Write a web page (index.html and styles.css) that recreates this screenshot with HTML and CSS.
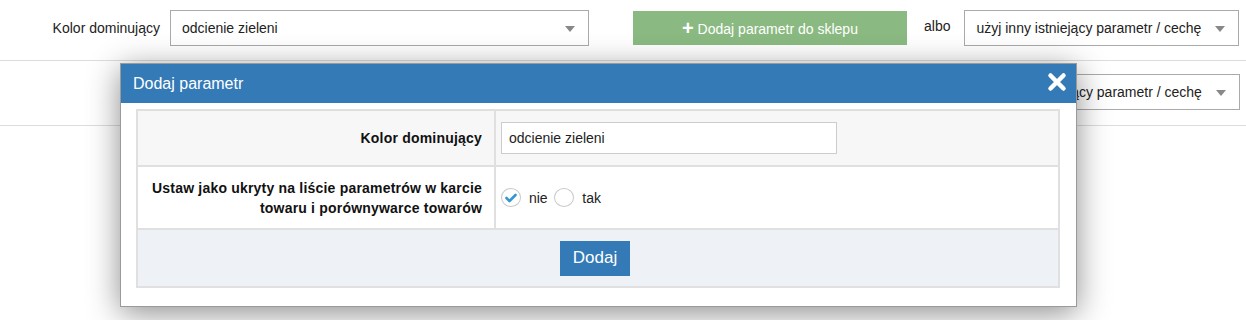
FILE: index.html
```html
<!DOCTYPE html>
<html lang="pl">
<head>
    <meta charset="UTF-8">
    <title>Parametry</title>
    <link rel="stylesheet" href="styles.css">
</head>
<body>
    <!-- Parameter rows -->
    <div class="param-row first">
        <label class="param-label">Kolor dominujący</label>
        <div class="select wide">odcienie zieleni</div>
        <a href="#" class="btn-add"><span class="plus">+</span> Dodaj parametr do sklepu</a>
        <span class="albo">albo</span>
        <div class="select narrow">użyj inny istniejący parametr / cechę</div>
    </div>
    <!-- second row: only the right select is visible behind the modal -->
    <div class="param-row second">
        <div class="select narrow">użyj inny istniejący parametr / cechę</div>
    </div>

    <!-- Modal window -->
    <div class="modal">
        <div class="modal-header">
            <span class="modal-title">Dodaj parametr</span>
            <svg class="close" width="20" height="20" viewBox="0 0 20 20">
                <path d="M3.5 3.5 L16.5 16.5 M16.5 3.5 L3.5 16.5" stroke="#fff" stroke-width="4.5" stroke-linecap="round"/>
            </svg>
        </div>
        <div class="modal-body">
            <table class="form-table">
                <tr class="row-gray">
                    <th>Kolor dominujący</th>
                    <td><input type="text" class="text-input" value="odcienie zieleni"></td>
                </tr>
                <tr class="row-white">
                    <th>Ustaw jako ukryty na liście parametrów w karcie towaru i porównywarce towarów</th>
                    <td>
                        <span class="radio checked">
                            <svg width="12" height="10" viewBox="0 0 12 10"><path d="M1.5 5 L4.5 8 L10.5 2" stroke="#3596d4" stroke-width="2.6" fill="none" stroke-linecap="round" stroke-linejoin="round"/></svg>
                        </span>
                        <span class="radio-text">nie</span>
                        <span class="radio"></span>
                        <span class="radio-text">tak</span>
                    </td>
                </tr>
                <tr class="row-footer">
                    <td colspan="2"><button class="btn-submit">Dodaj</button></td>
                </tr>
            </table>
        </div>
    </div>
</body>
</html>
```

FILE: styles.css
```css
* {
    margin: 0;
    padding: 0;
    box-sizing: border-box;
}

body {
    background-color: #fff;
    font-family: "Liberation Sans", Arial, sans-serif;
    font-size: 14px;
    color: #222;
    position: relative;
    height: 320px;
    overflow: hidden;
}

/* Parameter rows */
.param-row {
    display: flex;
    align-items: center;
    padding: 13px 0 15px;
    border-bottom: 1px solid #ddd;
}

.param-row.first {
    padding-top: 10px;
    padding-bottom: 14px;
}

.param-row.second {
    justify-content: flex-end;
    padding-right: 6px;
}

.param-label {
    width: 160px;
    text-align: right;
    margin-right: 10px;
}

.select {
    position: relative;
    height: 36px;
    line-height: 34px;
    border: 1px solid #aaa;
    padding-left: 11px;
    color: #222;
}

.select::after {
    content: "";
    position: absolute;
    right: 13px;
    top: 15px;
    border-left: 5px solid transparent;
    border-right: 5px solid transparent;
    border-top: 6px solid #888;
}

.select.wide {
    width: 419px;
}

.select.narrow {
    width: 275px;
}

.btn-add {
    margin-left: 44px;
    width: 274px;
    height: 34px;
    line-height: 34px;
    background-color: #8aba81;
    color: #fff;
    text-align: center;
    text-decoration: none;
}

.btn-add .plus {
    font-weight: bold;
    font-size: 20px;
    vertical-align: -1px;
}

.albo {
    margin: 0 14px 0 17px;
    color: #222;
    position: relative;
    top: -2px;
}

/* Modal */
.modal {
    position: absolute;
    left: 120px;
    top: 63px;
    width: 957px;
    height: 244px;
    background-color: #fff;
    border: 1px solid #9a9a9a;
    box-shadow: 0 6px 30px rgba(0, 0, 0, 0.45);
}

.modal-header {
    height: 39px;
    background-color: #337ab7;
    color: #fff;
    display: flex;
    align-items: center;
    justify-content: space-between;
    padding: 0 8px 0 12px;
}

.modal-title {
    font-size: 16px;
}

.close {
    margin-top: -3px;
    margin-right: 1px;
}

.modal-body {
    padding: 6px 16px 0 15px;
}

.form-table {
    width: 924px;
    border-collapse: collapse;
    border: 1px solid #ddd;
}

.form-table th,
.form-table td {
    border: 2px solid #e0e0e0;
}

.form-table th {
    width: 358px;
    text-align: right;
    font-size: 14px;
    font-weight: bold;
    letter-spacing: 0.2px;
    line-height: 20px;
    padding: 0 12px 0 14px;
    color: #111;
}

.form-table td {
    padding: 0 5px;
}

.form-table tr.row-gray {
    height: 56px;
    background-color: #f7f7f7;
}

.form-table tr.row-white {
    height: 63px;
}

.text-input {
    width: 336px;
    height: 32px;
    border: 1px solid #ccc;
    padding-left: 7px;
    font-family: "Liberation Sans", Arial, sans-serif;
    font-size: 14px;
    color: #222;
    outline: none;
}

.radio {
    display: inline-flex;
    align-items: center;
    justify-content: center;
    width: 20px;
    height: 19px;
    border: 1px solid #c8c8c8;
    border-radius: 50%;
    vertical-align: middle;
    background-color: #fff;
}

.radio-text {
    vertical-align: middle;
    margin: 0 3px 0 4px;
}

.form-table tr.row-footer {
    height: 58px;
    background-color: #eef1f6;
}

.row-footer td {
    text-align: center;
}

.btn-submit {
    width: 70px;
    height: 35px;
    background-color: #337ab7;
    color: #fff;
    border: none;
    font-family: "Liberation Sans", Arial, sans-serif;
    font-size: 17px;
    margin-left: -6px;
}
```
